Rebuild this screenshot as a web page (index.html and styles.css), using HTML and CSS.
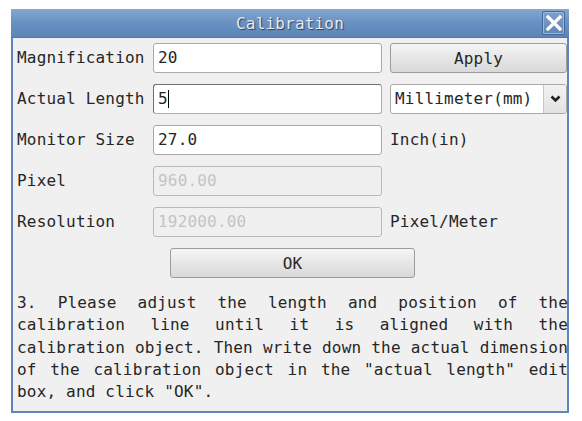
FILE: index.html
```html
<!DOCTYPE html>
<html>
<head>
<meta charset="utf-8">
<link rel="stylesheet" href="styles.css">
</head>
<body>
<div class="dialog">
  <div class="titlebar">
    <span class="title">Calibration</span>
    <div class="close">
      <svg width="18" height="18" viewBox="0 0 18 18"><path d="M3 3 L15 15 M15 3 L3 15" stroke="#ffffff" stroke-width="3.2" stroke-linecap="square" fill="none"/></svg>
    </div>
  </div>
  <div class="content">
    <div class="form">
      <div class="label">Magnification</div>
      <div class="input">20</div>
      <div class="button">Apply</div>

      <div class="label">Actual Length</div>
      <div class="input focus">5<span class="caret"></span></div>
      <div class="select">
        <span class="select-text">Millimeter(mm)</span>
        <span class="select-arrow"><svg width="11" height="8" viewBox="0 0 11 8"><path d="M1.5 1.5 L5.5 5.5 L9.5 1.5" stroke="#222" stroke-width="2.6" fill="none"/></svg></span>
      </div>

      <div class="label">Monitor Size</div>
      <div class="input">27.0</div>
      <div class="unit">Inch(in)</div>

      <div class="label">Pixel</div>
      <div class="input disabled">960.00</div>
      <div class="unit"></div>

      <div class="label">Resolution</div>
      <div class="input disabled">192000.00</div>
      <div class="unit">Pixel/Meter</div>
    </div>
    <div class="ok-row">
      <div class="button ok">OK</div>
    </div>
    <p class="note">3. Please adjust the length and position of the calibration line until it is aligned with the calibration object. Then write down the actual dimension of the calibration object in the "actual length" edit box, and click "OK".</p>
  </div>
</div>
</body>
</html>
```

FILE: styles.css
```css
html, body {
  margin: 0;
  padding: 0;
  background: #ffffff;
}
body {
  padding: 9px 0 0 11px;
  font-family: "DejaVu Sans Mono", monospace;
  font-size: 16px;
  letter-spacing: 0.18px;
  color: #262626;
}
.dialog {
  width: 558px;
  box-sizing: border-box;
  border: 2px solid #5d87ba;
  border-top: none;
  background: #f0f0f0;
}
.titlebar {
  height: 28px;
  margin: 0 -2px;
  background: linear-gradient(#86a8d2, #6a92c3 45%, #5b85b8);
  display: flex;
  align-items: center;
  justify-content: center;
  position: relative;
  border-bottom: 1px solid #4f77a8;
}
.title {
  color: #e6e9ee;
  text-shadow: 1px 1px 1px #2c3e57;
  font-size: 16px;
}
.close {
  position: absolute;
  right: 4px;
  top: 2px;
  width: 23px;
  height: 24px;
  box-sizing: border-box;
  border: 1px solid #46689a;
  border-radius: 2px;
  background: linear-gradient(#7d9fca, #6286b6);
  box-shadow: inset 0 0 0 1px #9ab6da;
  display: flex;
  align-items: center;
  justify-content: center;
}
.content {
  padding: 5px 0 8px 4px;
}
.form {
  display: grid;
  grid-template-columns: 128px 229px 177px;
  column-gap: 8px;
  row-gap: 11px;
  align-items: center;
}
.label {
  height: 30px;
  line-height: 30px;
  white-space: nowrap;
}
.input {
  height: 30px;
  box-sizing: border-box;
  border: 1px solid #a9a9a9;
  border-radius: 3px;
  background: #ffffff;
  padding-left: 4px;
  line-height: 28px;
  display: flex;
  align-items: center;
}
.input.focus {
  border-color: #6f6f6f;
  border-right-color: #b0b0b0;
  border-bottom-color: #b0b0b0;
}
.caret {
  display: inline-block;
  width: 1px;
  height: 18px;
  background: #000;
}
.input.disabled {
  background: #f0f0f0;
  color: #c4c4c4;
  border-color: #b9b9b9;
}
.button {
  height: 30px;
  box-sizing: border-box;
  border: 1px solid #9c9c9c;
  border-radius: 3px;
  background: linear-gradient(#f6f6f6, #e6e6e6 50%, #d9d9d9);
  display: flex;
  align-items: center;
  justify-content: center;
}
.select {
  height: 30px;
  box-sizing: border-box;
  border: 1px solid #a9a9a9;
  border-radius: 3px;
  background: #ffffff;
  display: flex;
  align-items: stretch;
  overflow: hidden;
}
.select-text {
  flex: 1;
  padding-left: 4px;
  line-height: 28px;
}
.select-arrow {
  width: 22px;
  border-left: 1px solid #c8c8c8;
  background: linear-gradient(#f2f2f2, #e2e2e2);
  display: flex;
  align-items: center;
  justify-content: center;
}
.unit {
  height: 30px;
  line-height: 30px;
}
.ok-row {
  display: flex;
  padding-left: 153px;
  margin-top: 11px;
}
.ok {
  width: 245px;
}
.note {
  margin: 14px 0 0 0;
  width: 551px;
  line-height: 22.3px;
  text-align: justify;
}
```
